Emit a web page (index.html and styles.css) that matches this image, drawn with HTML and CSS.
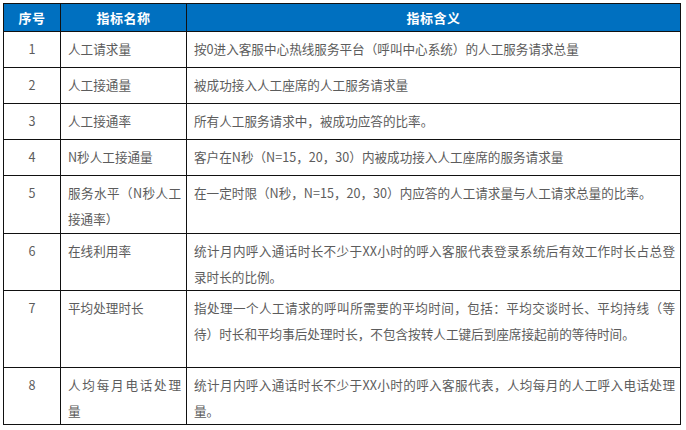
FILE: index.html
```html
<!DOCTYPE html>
<html lang="zh">
<head>
<meta charset="utf-8">
<title>指标</title>
<link rel="stylesheet" href="styles.css">
</head>
<body>
<table class="kpi">
  <colgroup>
    <col class="c-no">
    <col class="c-name">
    <col class="c-desc">
  </colgroup>
  <thead>
    <tr class="head">
      <th>序号</th>
      <th>指标名称</th>
      <th>指标含义</th>
    </tr>
  </thead>
  <tbody>
    <tr class="r1">
      <td class="no">1</td>
      <td>人工请求量</td>
      <td>按0进入客服中心热线服务平台（呼叫中心系统）的人工服务请求总量</td>
    </tr>
    <tr class="r1">
      <td class="no">2</td>
      <td>人工接通量</td>
      <td>被成功接入人工座席的人工服务请求量</td>
    </tr>
    <tr class="r1">
      <td class="no">3</td>
      <td>人工接通率</td>
      <td>所有人工服务请求中，被成功应答的比率。</td>
    </tr>
    <tr class="r1">
      <td class="no">4</td>
      <td>N秒人工接通量</td>
      <td>客户在N秒（N=15，20，30）内被成功接入人工座席的服务请求量</td>
    </tr>
    <tr class="r5">
      <td class="no">5</td>
      <td><span class="just">服务水平（N秒人工</span>接通率）</td>
      <td>在一定时限（N秒，N=15，20，30）内应答的人工请求量与人工请求总量的比率。</td>
    </tr>
    <tr class="r6">
      <td class="no">6</td>
      <td>在线利用率</td>
      <td><span class="just">统计月内呼入通话时长不少于XX小时的呼入客服代表登录系统后有效工作时长占总登</span>录时长的比例。</td>
    </tr>
    <tr class="r7">
      <td class="no">7</td>
      <td>平均处理时长</td>
      <td><span class="just">指处理一个人工请求的呼叫所需要的平均时间，包括：平均交谈时长、平均持线（等</span>待）时长和平均事后处理时长，不包含按转人工键后到座席接起前的等待时间。</td>
    </tr>
    <tr class="r8">
      <td class="no">8</td>
      <td><span class="just">人均每月电话处理</span>量</td>
      <td><span class="just">统计月内呼入通话时长不少于XX小时的呼入客服代表，人均每月的人工呼入电话处理</span>量。</td>
    </tr>
  </tbody>
</table>
</body>
</html>
```
FILE: styles.css
```css
html, body {
  margin: 0;
  padding: 0;
  background: #ffffff;
}

body {
  font-family: "Noto Sans CJK SC", "Noto Sans", "Liberation Sans", sans-serif;
  font-size: 12.6px;
  color: #5c5c5c;
}

.kpi {
  border-collapse: collapse;
  margin: 3px 0 0 3px;
  width: 677px;
  table-layout: fixed;
}

.c-no { width: 57px; }
.c-name { width: 126px; }
.c-desc { width: 494px; }

.kpi th,
.kpi td {
  border: 1px solid #111111;
}

.kpi th {
  background: #0070c0;
  color: #ffffff;
  font-size: 13px;
  font-weight: bold;
  text-align: center;
  vertical-align: middle;
  padding: 0;
  line-height: 20px;
  letter-spacing: 0.5px;
}

.kpi td {
  vertical-align: top;
  text-align: left;
  padding: 4px 5px 0 7px;
  line-height: 26px;
  white-space: nowrap;
}

.kpi td.no {
  text-align: center;
  padding-left: 0;
  padding-right: 0;
}

.just {
  display: block;
  text-align: justify;
  text-align-last: justify;
  text-justify: inter-character;
}

.head { height: 28px; }
.r1 { height: 36px; }
.r5 { height: 58px; }
.r6 { height: 55px; }
.r7 { height: 77px; }
.r8 { height: 54px; }
```
